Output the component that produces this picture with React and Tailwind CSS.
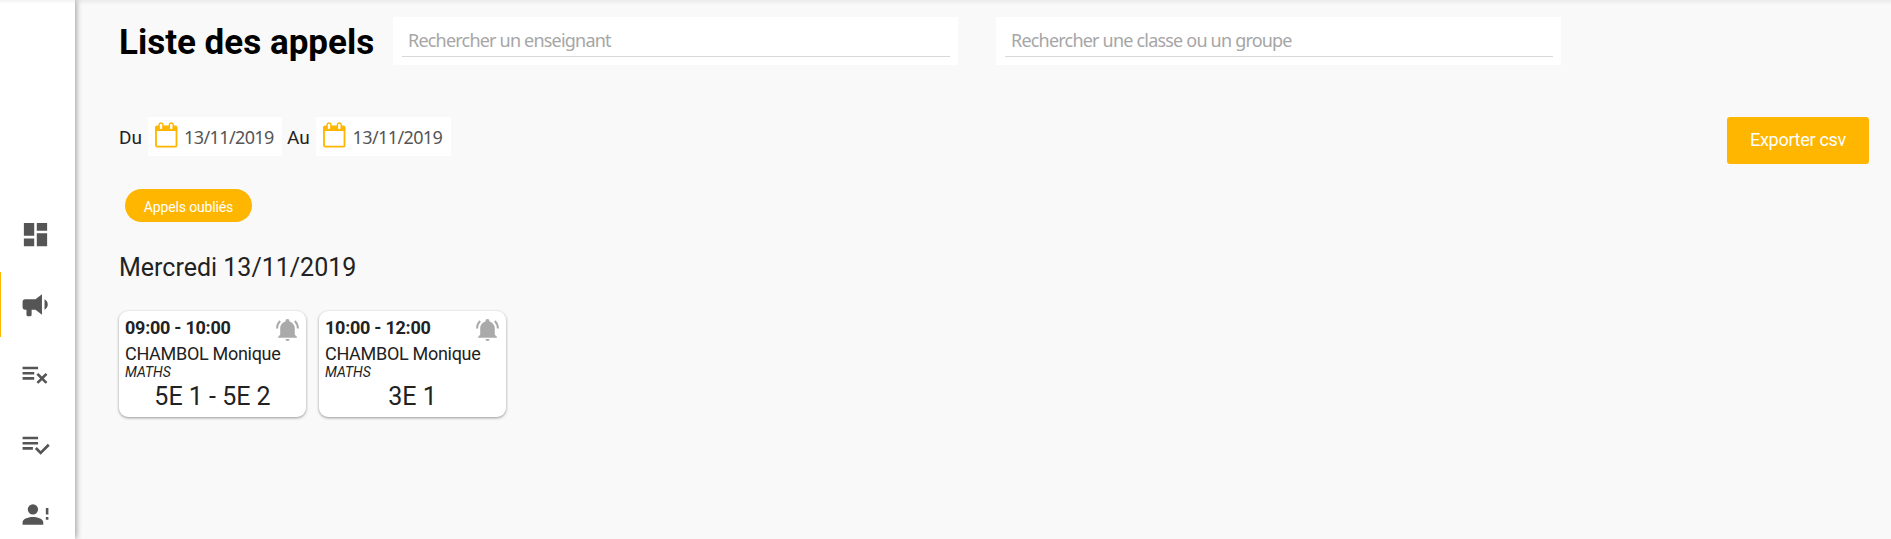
const NAV = [
  "M13 3v6h8V3m-8 18h8V11h-8M3 21h8v-6H3m0-2h8V3H3v10z",
  "M12,8H4A2,2 0 0,0 2,10V14A2,2 0 0,0 4,16H5V20A1,1 0 0,0 6,21H8A1,1 0 0,0 9,20V16H12L17,20V4L12,8M21.5,12C21.5,13.71 20.54,15.26 19,16V8C20.53,8.75 21.5,10.3 21.5,12Z",
  "M2,6V8H14V6H2M2,10V12H11V10H2M14.17,10.76L12.76,12.17L15.59,15L12.76,17.83L14.17,19.24L17,16.41L19.83,19.24L21.24,17.83L18.41,15L21.24,12.17L19.83,10.76L17,13.59L14.17,10.76M2,14V16H11V14H2Z",
  "M14,10H2V12H14V10M14,6H2V8H14V6M2,16H10V14H2V16M21.5,11.5L23,13L16,20L11.5,15.5L13,14L16,17L21.5,11.5Z",
  "M10,4A4,4 0 0,1 14,8A4,4 0 0,1 10,12A4,4 0 0,1 6,8A4,4 0 0,1 10,4M10,14C14.42,14 18,15.79 18,18V20H2V18C2,15.79 5.58,14 10,14M20,12V7H22V12H20M20,16V14H22V16H20Z",
];

const BELL =
  "M21 19v1H3v-1l2-2v-6c0-3.1 2.03-5.83 5-6.71V4a2 2 0 0 1 2-2 2 2 0 0 1 2 2v.29c2.97.88 5 3.61 5 6.71v6l2 2m-7 2a2 2 0 0 1-2 2 2 2 0 0 1-2-2m9.75-17.81-1.42 1.42A8.98 8.98 0 0 1 21 11h2c0-2.93-1.16-5.75-3.25-7.81M1 11h2c0-2.4.96-4.7 2.67-6.39L4.25 3.19A10.96 10.96 0 0 0 1 11Z";

function Sidebar() {
  return (
    <nav className="flex w-[75px] shrink-0 flex-col bg-white bg-linear-to-b from-black/5 to-transparent to-[4px] pt-[202px] shadow-[1px_0_6px_0_rgba(0,0,0,0.4)]">
      {NAV.map((d, i) => (
        <a
          key={i}
          className={
            "mb-[5px] flex h-[65px] shrink-0 items-center border-l pl-[18.5px] " +
            (i === 1 ? "border-[#ffb600]" : "border-transparent")
          }
        >
          <svg viewBox="0 0 24 24" className="size-[31px] fill-[#555]">
            <path d={d} />
          </svg>
        </a>
      ))}
    </nav>
  );
}

function Search({ placeholder, className }) {
  return (
    <div className={"h-12 bg-white pt-2 pr-2 pl-[9px] " + className}>
      <input
        placeholder={placeholder}
        className="block h-8 w-full border-b border-[#d8d8d8] px-[6px] pb-[2px] font-['Noto_Sans',sans-serif] text-[18px] tracking-[-0.8px] outline-none placeholder:text-[#a6a6a6]"
      />
    </div>
  );
}

function DateField({ value }) {
  return (
    <div className="flex h-[39px] w-[134.5px] items-center bg-white pl-[6px]">
      <svg viewBox="0 0 24 26" className="-mt-[3px] h-[26px] w-6 shrink-0">
        <rect x="2" y="5" width="20.5" height="19.7" rx="1.2" fill="#fff" stroke="#ffb600" strokeWidth="1.8" />
        <path d="M1.1 9V5.5Q1.1 3.5 3 3.5H21.5Q23.4 3.5 23.4 5.5V9Z" fill="#ffb600" />
        <rect x="5.1" y="1" width="3.8" height="6.8" rx="1.9" fill="#fff" stroke="#ffb600" strokeWidth="1.4" />
        <rect x="15.4" y="1" width="3.8" height="6.8" rx="1.9" fill="#fff" stroke="#ffb600" strokeWidth="1.4" />
      </svg>
      <span className="mt-[2px] ml-[6.5px] font-['Noto_Sans',sans-serif] text-[18px] tracking-[-0.6px] text-[#555]">
        {value}
      </span>
    </div>
  );
}

function Card({ time, teacher, subject, group }) {
  return (
    <article className="h-[106px] w-[187px] rounded-[9px] bg-white px-[6px] pt-[6px] shadow-[0_1px_3px_rgba(0,0,0,0.4)]">
      <div className="flex h-[26px] justify-between">
        <b className="text-[18px] leading-[22px] font-bold tracking-[-0.25px]">{time}</b>
        <svg viewBox="0 0 24 24" className="size-[25px] shrink-0 fill-[#aaa]">
          <path d={BELL} />
        </svg>
      </div>
      <div className="text-[18px] leading-[22px] tracking-[-0.3px]">{teacher}</div>
      <div className="text-[14px] leading-[15px] italic">{subject}</div>
      <div className="mt-[2px] text-center text-[25px] leading-[30px]">{group}</div>
    </article>
  );
}

export default function App() {
  return (
    <div className="flex h-[539px] w-full overflow-hidden bg-[#f9f9f9] bg-linear-to-b from-black/6 to-transparent to-[5px] font-[Roboto,sans-serif] text-[#222]">
      <Sidebar />
      <main className="flex-1 pt-[17px] pr-[22px] pl-11">
        <header className="flex">
          <h1 className="mt-[5px] w-[274px] shrink-0 text-[35px] leading-[42px] font-bold whitespace-nowrap text-black">
            Liste des appels
          </h1>
          <Search placeholder="Rechercher un enseignant" className="w-[565px]" />
          <Search placeholder="Rechercher une classe ou un groupe" className="ml-[38px] w-[565px]" />
        </header>
        <div className="mt-[52px] flex h-[47px] items-start">
          <span className="w-[28.5px] pt-px text-[19px] leading-[40px]">Du</span>
          <DateField value="13/11/2019" />
          <span className="ml-[5px] w-[29px] pt-px text-[19px] leading-[40px]">Au</span>
          <DateField value="13/11/2019" />
          <button className="ml-auto h-[47px] w-[142px] rounded-[3px] bg-[#ffb600] pb-[2px] text-[18px] tracking-[-0.3px] text-white">
            Exporter csv
          </button>
        </div>
        <button className="mt-[25px] ml-[6px] block h-[33px] w-[127px] rounded-full bg-[#ffb600] pt-[3px] text-[14px] tracking-[-0.15px] text-white">
          Appels oubliés
        </button>
        <h2 className="mt-[31px] text-[25px] leading-[30px]">Mercredi 13/11/2019</h2>
        <div className="mt-[28px] flex gap-[13px]">
          <Card time="09:00 - 10:00" teacher="CHAMBOL Monique" subject="MATHS" group="5E 1 - 5E 2" />
          <Card time="10:00 - 12:00" teacher="CHAMBOL Monique" subject="MATHS" group="3E 1" />
        </div>
      </main>
    </div>
  );
}
